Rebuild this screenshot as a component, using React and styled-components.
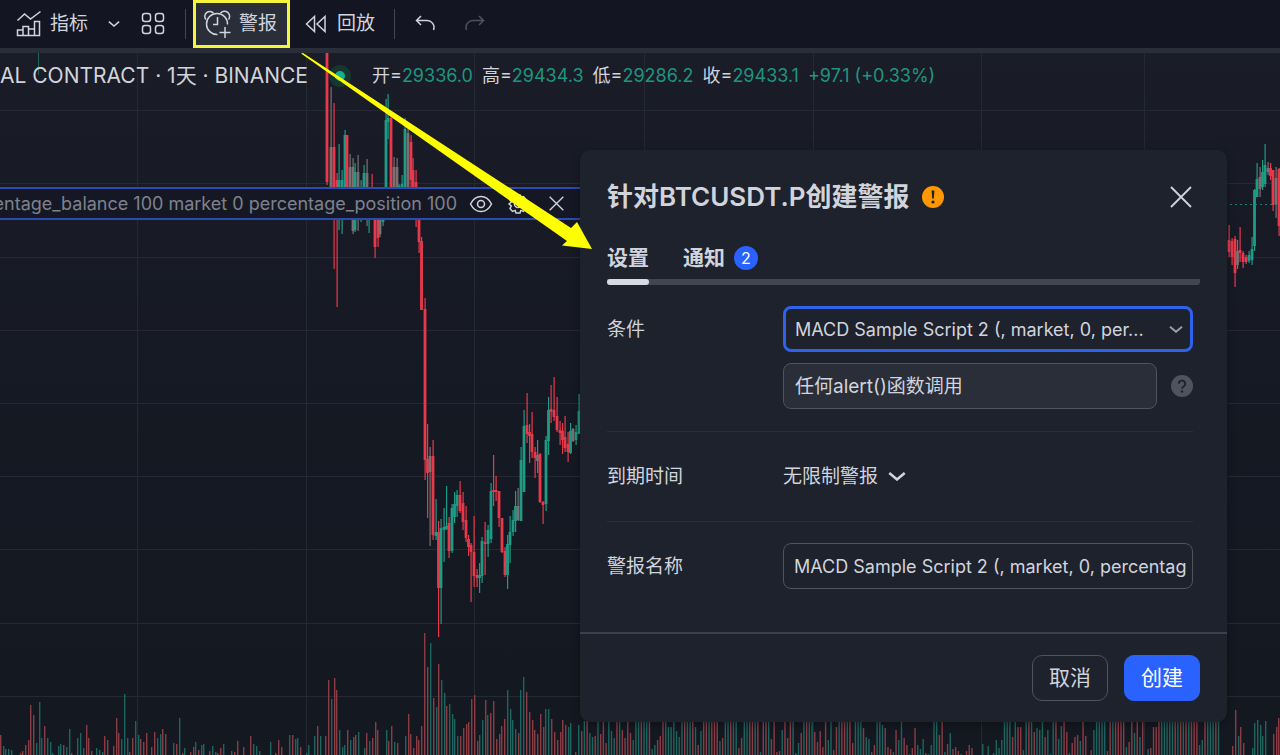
import React from 'react'
import styled, { createGlobalStyle, css } from 'styled-components'

const GlobalStyle = createGlobalStyle`
  * {
    box-sizing: border-box;
  }
  body {
    margin: 0;
    background: #151923;
    color: #d1d4dc;
    font-family: Inter, 'Noto Sans CJK SC', sans-serif;
    font-size: 18px;
  }
  button,
  input,
  select {
    margin: 0;
    font-family: inherit;
    color: inherit;
  }
`

const Page = styled.div`
  position: relative;
  display: flex;
  flex-direction: column;
  height: 100vh;
  min-height: 740px;
  overflow: hidden;
`

/* toolbar */

const Toolbar = styled.header`
  display: flex;
  align-items: center;
  height: 53px;
  padding: 0 5px;
  background: #131622;
  border-bottom: 5px solid #2a2e39;
`

const Tool = styled.button`
  display: flex;
  align-items: center;
  gap: ${props => props.gap || 8}px;
  height: 48px;
  padding: 0 ${props => props.pad || 11}px;
  border: 0;
  background: none;
  font-size: 19px;
  line-height: 28px;
  white-space: nowrap;
  color: ${props => (props.dim ? '#50535e' : '#d1d4dc')};
  ${props =>
    props.marked &&
    css`
      margin-right: 4px;
      padding: 0 10px 0 8px;
      border: 3px solid #f5f53c;
      background: #2a2e39;
    `};
`

const ToolDivider = styled.span`
  width: 1px;
  height: 30px;
  margin: 0 7px 0 8px;
  background: #434651;
`

const Icon = styled.svg`
  flex: none;
  display: block;
  fill: none;
  stroke: currentColor;
  stroke-width: ${props => props.weight || 1.5};
`

/* chart */

const ChartArea = styled.main`
  position: relative;
  flex: 1;
  overflow: hidden;
  background: linear-gradient(#1a1c28, #151923 50%, #141820);
`

const ChartCanvas = styled.svg`
  position: absolute;
  inset: 0;
  width: 100%;
  height: 100%;
`

const Legend = styled.div`
  position: relative;
  display: flex;
  align-items: center;
  gap: 21px;
  height: 46px;
  white-space: nowrap;
`

const Symbol = styled.h1`
  margin: 0;
  font-size: 21px;
  font-weight: 400;
  line-height: 28px;
`

const StatusDot = styled.span`
  width: 22px;
  height: 22px;
  border: 6px solid #16362f;
  border-radius: 50%;
  background: #12b08e;
`

const Prices = styled.div`
  display: flex;
  gap: 9px;
  line-height: 28px;
`

const Up = styled.span`
  color: #1f957f;
`

const Strategy = styled.div`
  position: relative;
  display: flex;
  align-items: center;
  justify-content: flex-end;
  width: 594px;
  height: 33px;
  margin-top: 88px;
  padding-right: 30px;
  border: solid #2a4cae;
  border-width: 2px 0;
  background: #151824;
  overflow: hidden;
  white-space: nowrap;
`

const StrategyName = styled.span`
  margin-right: 12px;
  color: #7f828d;
`

const StrategyButton = styled.button`
  display: flex;
  align-items: center;
  padding: 0;
  margin-left: ${props => props.gap || 0}px;
  border: 0;
  background: none;
`

/* alert dialog */

const Dialog = styled.section`
  position: absolute;
  top: 150px;
  right: 53px;
  width: min(647px, 94vw);
  border-radius: 10px;
  background: #1e222d;
  box-shadow: 0 2px 10px rgba(0, 0, 0, 0.35);
`

const DialogHeader = styled.div`
  display: flex;
  align-items: center;
  gap: 12px;
  padding: 30px 35px 0 27px;
`

const DialogTitle = styled.h2`
  margin: 0;
  font-size: 26px;
  font-weight: 600;
  line-height: 34px;
`

const CloseButton = styled.button`
  display: flex;
  margin-left: auto;
  padding: 0;
  border: 0;
  background: none;
`

const Tabs = styled.div`
  display: flex;
  gap: 34px;
  margin: 30px 27px 0;
  border-bottom: 6px solid #434651;
  border-radius: 0 0 3px 3px;
`

const Tab = styled.button`
  position: relative;
  display: flex;
  align-items: center;
  gap: 9px;
  height: 35px;
  padding: 0 0 7px;
  border: 0;
  background: none;
  font-size: 21px;
  font-weight: 600;
  line-height: 28px;
  ${props =>
    props.active &&
    css`
      &::after {
        content: '';
        position: absolute;
        right: 0;
        bottom: -6px;
        left: 0;
        height: 6px;
        border-radius: 3px;
        background: #d8dae3;
      }
    `};
`

const Count = styled.span`
  width: 24px;
  border-radius: 12px;
  background: #2962ff;
  color: #fff;
  font-size: 16px;
  font-weight: 400;
  line-height: 24px;
  text-align: center;
`

const Form = styled.form`
  padding: 21px 34px 21px 27px;
`

const Row = styled.div`
  display: grid;
  grid-template-columns: 176px minmax(0, 1fr);
  align-items: start;
  padding-bottom: 22px;
  & + & {
    padding-top: 21px;
    border-top: 1px solid #2a2e39;
  }
`

const Label = styled.label`
  height: 46px;
  font-size: 19px;
  line-height: 48px;
`

const Stack = styled.div`
  display: grid;
  gap: 11px;
`

const Line = styled.div`
  display: flex;
  align-items: center;
  gap: 14px;
`

const SelectBox = styled.div`
  display: grid;
  flex: ${props => (props.inline ? 'none' : 1)};
  align-items: center;
  & > * {
    grid-area: 1 / 1;
  }
  & > svg {
    justify-self: end;
    margin-right: ${props => (props.inline ? 0 : 10)}px;
    color: ${props => (props.inline ? '#d1d4dc' : '#9a9da8')};
    pointer-events: none;
  }
`

const field = css`
  width: 100%;
  height: 46px;
  padding: 0 10px;
  border: 1px solid #50535e;
  border-radius: 8px;
  background: #1e222d;
  font-size: 18px;
  outline: none;
`

const Select = styled.select`
  ${field};
  appearance: none;
  &:disabled {
    padding: 0 11px;
    background: #2a2e39;
    color: #d1d4dc;
    font-size: 19px;
    opacity: 1;
  }
  ${props =>
    props.focused &&
    css`
      padding: 0 9px;
      border: 3px solid #2f62ea;
    `};
`

const PlainSelect = styled.select`
  height: 46px;
  padding: 0 27px 0 0;
  border: 0;
  background: none;
  appearance: none;
  font-size: 19px;
`

const TextInput = styled.input`
  ${field};
  padding: 0 5px 0 10px;
`

const DialogFooter = styled.div`
  display: flex;
  justify-content: flex-end;
  gap: 16px;
  padding: 21px 27px;
  border-top: 2px solid #3c404b;
`

const Action = styled.button`
  height: 46px;
  padding: 0 16px;
  border: 1px solid ${props => (props.primary ? '#2962ff' : '#50535e')};
  border-radius: 10px;
  background: ${props => (props.primary ? '#2962ff' : 'transparent')};
  color: ${props => (props.primary ? '#fff' : '#d1d4dc')};
  font-size: 21px;
  line-height: 28px;
`

const Pointer = styled.svg`
  position: absolute;
  top: 50px;
  left: 298px;
  width: 300px;
  height: 204px;
  pointer-events: none;
`

/* x, high, low, body top, body bottom, colour */
const candles = [
  [327, 53, 185, 53, 182, 'r'], [331, 87, 187, 147, 187, 'm'], [334, 103, 269, 147, 187, 'r'],
  [337, 173, 307, 180, 190, 'r'], [339, 144, 230, 180, 190, 'g'], [342, 170, 234, 180, 190, 'g'],
  [345, 130, 190, 135, 190, 'g'], [347, 135, 190, 135, 190, 'r'], [350, 154, 190, 167, 190, 'm'],
  [353, 158, 234, 167, 231, 'm'], [355, 163, 232, 172, 230, 'g'], [358, 155, 231, 172, 190, 'm'],
  [361, 180, 222, 190, 200, 'g'], [364, 165, 200, 173, 190, 'g'], [367, 159, 226, 173, 190, 'm'],
  [369, 187, 233, 190, 200, 'g'], [372, 174, 218, 190, 200, 'r'], [375, 195, 258, 200, 247, 'r'],
  [378, 200, 247, 210, 238, 'r'], [380, 200, 237, 210, 234, 'm'], [383, 190, 226, 200, 222, 'g'],
  [386, 99, 190, 120, 190, 'g'], [388, 94, 139, 118, 122, 'g'], [391, 116, 190, 118, 190, 'r'],
  [394, 157, 190, 167, 190, 'm'], [397, 158, 190, 167, 190, 'm'], [399, 184, 190, 186, 190, 'g'],
  [402, 175, 190, 184, 190, 'g'], [405, 118, 190, 129, 190, 'g'], [408, 128, 190, 133, 190, 'm'],
  [411, 135, 190, 142, 180, 'r'], [413, 158, 190, 170, 190, 'r'], [416, 170, 227, 182, 215, 'r'],
  [419, 200, 253, 205, 242, 'r'], [421.5, 237, 310, 241, 310, 'r'], [425, 298, 480, 309, 460, 'r'],
  [427.5, 424, 518, 459, 473, 'r'], [430, 447, 546, 456, 472, 'm'], [433, 440, 540, 456, 535, 'r'],
  [436, 499, 540, 532, 536, 'g'], [438.5, 521, 637, 532, 588, 'r'], [441, 519, 624, 528, 588, 'g'],
  [444, 508, 562, 527, 530, 'g'], [446.5, 486, 530, 526, 529, 'g'], [449, 517, 558, 523, 551, 'r'],
  [452, 504, 553, 508, 551, 'g'], [454.5, 492, 523, 504, 517, 'g'], [457, 490, 517, 495, 506, 'g'],
  [460, 481, 513, 495, 511, 'r'], [463, 492, 530, 503, 522, 'r'], [466, 506, 542, 520, 538, 'r'],
  [468.5, 535, 556, 539, 547, 'r'], [471, 543, 602, 545, 552, 'r'], [474, 516, 587, 552, 576, 'r'],
  [477, 569, 587, 575, 578, 'r'], [479.5, 563, 593, 575, 578, 'g'], [482, 537, 583, 541, 576, 'g'],
  [485, 522, 575, 542, 544, 'r'], [488, 525, 557, 530, 544, 'g'], [491, 483, 543, 491, 539, 'g'],
  [493.5, 455, 506, 490, 492, 'r'], [496, 476, 501, 490, 492, 'r'], [499, 491, 527, 491, 518, 'r'],
  [502, 518, 553, 518, 552, 'r'], [505, 547, 577, 551, 575, 'r'], [507.5, 535, 589, 544, 575, 'g'],
  [510, 516, 563, 532, 545, 'g'], [513, 510, 536, 520, 532, 'g'], [515.5, 491, 532, 506, 521, 'g'],
  [518, 488, 521, 506, 520, 'm'], [521, 447, 521, 460, 521, 'g'], [524, 410, 492, 426, 492, 'g'],
  [527, 393, 443, 425, 434, 'r'], [529.5, 424, 463, 432, 436, 'r'], [532, 412, 458, 434, 452, 'r'],
  [535, 447, 478, 452, 458, 'r'], [537.5, 440, 473, 455, 461, 'm'], [540, 453, 503, 454, 502, 'r'],
  [543, 501, 524, 502, 505, 'r'], [546, 436, 511, 440, 504, 'g'], [548.5, 397, 455, 410, 441, 'g'],
  [551, 385, 423, 409, 412, 'r'], [554, 377, 421, 410, 417, 'r'], [557, 397, 432, 416, 430, 'r'],
  [560, 421, 445, 430, 433, 'r'], [562.5, 423, 454, 431, 440, 'r'], [565, 416, 452, 437, 448, 'r'],
  [568, 432, 462, 444, 452, 'r'], [570.5, 423, 454, 431, 453, 'g'], [573, 428, 442, 429, 441, 'm'],
  [576, 425, 445, 432, 440, 'g'], [579, 394, 434, 411, 434, 'g'],
  [1229, 225, 257, 240, 252, 'r'], [1232, 238, 265, 241, 257, 'r'], [1235, 236, 287, 239, 273, 'r'],
  [1237.5, 240, 269, 251, 265, 'm'], [1240, 227, 262, 250, 253, 'r'], [1243, 251, 268, 253, 262, 'r'],
  [1246, 255, 264, 257, 262, 'r'], [1249, 251, 263, 255, 261, 'g'], [1252, 237, 265, 249, 260, 'g'],
  [1254.5, 189, 251, 190, 246, 'g'], [1257, 163, 197, 179, 197, 'g'], [1260, 167, 197, 177, 189, 'm'],
  [1262.5, 160, 190, 172, 187, 'g'], [1265, 144, 187, 165, 184, 'g'], [1268, 162, 175, 168, 172, 'm'],
  [1270.5, 163, 180, 168, 176, 'r'], [1273, 170, 211, 170, 205, 'r'], [1276, 167, 218, 178, 205, 'm'],
  [1279, 168, 236, 169, 226, 'r'],
]

/* x, height; negative heights are falling days */
const volumes = [
  [0, -20], [3, 9], [5, 6], [8, 6], [11, 5], [20, -2], [22, -4], [25, -10], [28, -15], [30, -50],
  [33, -40], [36, 12], [39, 53], [41, 17], [44, -29], [47, 17], [50, 13], [52, 2], [58, 9], [60, 11],
  [63, -10], [66, 8], [69, 26], [71, -2], [77, 17], [80, 22], [83, 7], [86, -30], [88, -17], [91, -4],
  [96, 7], [99, 5], [102, 3], [104, -19], [107, -15], [113, -9], [116, -37], [118, -22], [121, 16],
  [124, 61], [127, 17], [129, -3], [132, -17], [135, 34], [138, 20], [140, -16], [143, -13], [146, -22],
  [151, -8], [154, -23], [157, 17], [160, 21], [162, -26], [165, -21], [173, 12], [176, -11], [179, 37],
  [182, -2], [184, 7], [190, -3], [193, -8], [195, 13], [198, -5], [201, 10], [203, 11], [209, -4],
  [212, 9], [215, 3], [217, -2], [220, -7], [223, 11], [231, 4], [234, -3], [237, -14], [243, -8],
  [250, -19], [253, 11], [256, 9], [259, 4], [270, 13], [275, -2], [278, -15], [281, -8], [289, 20],
  [292, -20], [295, 16], [297, 17], [300, -8], [306, 2], [308, 10], [314, 19], [317, -29], [320, 19],
  [325, -19], [328, -75], [331, 56], [334, -77], [336, -65], [339, 25], [342, 8], [344, 10], [347, -25],
  [350, 15], [353, -18], [355, -20], [358, 23], [364, 7], [366, -22], [369, 14], [372, -17], [375, -33],
  [377, -25], [386, 25], [388, -14], [391, -29], [394, 13], [397, -12], [405, 19], [408, -41], [410, -21],
  [413, -7], [416, -19], [418, -15], [421, -29], [424, -122], [427, -88], [430, 112], [433, -57],
  [436, 48], [438, -91], [441, 75], [444, 62], [446, -49], [449, 51], [452, 41], [454, 36], [457, 19],
  [460, -19], [463, -27], [466, -31], [468, -33], [471, -56], [474, -60], [477, -14], [479, 20], [482, 35],
  [485, -55], [487, 40], [490, -42], [493, -54], [496, -16], [499, -21], [501, -29], [504, -36], [507, 65],
  [510, 46], [512, 35], [515, 26], [518, -22], [520, 65], [523, 78], [526, -63], [529, -43], [532, -35],
  [534, -25], [537, -21], [540, -41], [543, -28], [545, 46], [548, 46], [551, -36], [554, -23], [557, -15],
  [560, -23], [562, -35], [565, -30], [568, 28], [570, 32], [575, -3], [578, 30], [1232, -9], [1235, -45],
  [1238, 19], [1240, -28], [1243, -12], [1252, 7], [1254, 32], [1257, 35], [1260, 30], [1262, 19],
  [1265, 34], [1273, -21], [1276, -28], [1278, -37],
]

/* evenly spaced run of days under the dialog, starting at x = 581 */
const denseVolumes = [
  -24, 34, -34, 22, 18, -19, 34, -21, -34, -12, 34, 24, 17, -34, 34, -25, -17, -34, -22, 15, 34, 34, -34,
  34, 34, -34, 6, 10, -15, -19, -34, 34, 28, 28, 34, 24, 18, 34, -34, 34, 34, -34, 28, -10, 24, -34, -34, 34,
  -34, -34, -34, 14, -17, 34, 34, -34, 34, 34, -7, -17, 34, 34, -34, -34, 34, -34, 3, -34, -34, 34, -16, -34,
  -3, -4, 25, -34, -17, -34, 34, 2, 12, -22, 34, -34, 34, 34, -23, -13, -24, -8, -34, 15, 34, -5, -28, 34,
  -34, -34, 34, -34, -12, 34, 34, 34, -27, 18, 16, -3, -10, 34, 34, 30, -27, -8, -6, 3, -25, 15, 34, -17,
  -10, 1, -7, -27, 10, 6, 16, -2, 1, 10, 34, 34, -20, -33, 3, -11, 22, -6, -8, -4, 1, 0, -4, -10, -7, 0,
  0, 0, 11, 0, 9, 0, 2, 15, 7, 15, 34, 34, 34, -18, 34, -28, -28, 5, 34, -34, 34, -23, 27, 25, 34, -18, 25,
  1, 34, -34, 16, 29, -34, -23, 2, -12, -18, -20, 14, -34, -19, 0, -5, 25, 34, 34, 34, 34, -4, -34, 34,
  -34, -34, -34, -34, 8, -13, -34, 22, -34, 18, -34, 0, 6, -7, -28, -28, -34, 34, 34, 34, 34, 34, -34, 34,
  -34, 34, -34, 34, -34, -34, -34, 10, 15, -34, 34, 34, 34, -34, 34,
].map((height, i) => [581 + i * 2.71, height])

const candleColors = { r: '#e8394c', g: '#1e9a85', m: '#7d6f70' }
const gridX = [137, 306, 474, 644, 813, 981, 1144]
const gridY = [110, 183, 257, 330, 403, 476, 549, 623, 696]

const Chart = () => (
  <ChartCanvas viewBox="0 53 1280 702" preserveAspectRatio="xMinYMin slice" aria-hidden="true">
    <g fill="#252933">
      {gridX.map(x => <rect key={x} x={x} y="53" width="1" height="702" />)}
      {gridY.map(y => <rect key={y} x="0" y={y} width="1280" height="1" />)}
    </g>
    {[...volumes, ...denseVolumes].map(([x, h], i) => (
      <rect key={i} x={x} y={755 - Math.abs(h)} width="1.4" height={Math.abs(h)} fill={h < 0 ? '#8a3c45' : '#1d645f'} />
    ))}
    <rect x="38" y="53" width="1" height="22" fill="#1d645f" />
    {candles.map(([x, high, low, top, bottom, c]) => (
      <g key={x} fill={candleColors[c]}>
        <rect x={x - 0.5} y={high} width="1.2" height={low - high} />
        <rect x={x - 1.4} y={top} width="2.8" height={bottom - top} />
      </g>
    ))}
    <path d="M1230 204.5H1280" stroke="#1f7f70" strokeDasharray="2 3" />
  </ChartCanvas>
)

const Chevron = ({ width = 14, weight = 2 }) => (
  <Icon width={width} height={width * 0.5} viewBox="0 0 14 7" weight={weight}>
    <path d="M1 .8l6 5 6-5" />
  </Icon>
)

const Cross = ({ size, weight }) => (
  <Icon width={size} height={size} viewBox="0 0 22 22" weight={weight}>
    <path d="M1 1l20 20M21 1L1 21" />
  </Icon>
)

const prices = [['开', '29336.0'], ['高', '29434.3'], ['低', '29286.2'], ['收', '29433.1']]

const App = () => {
  return (
    <Page>
      <GlobalStyle />
      <Toolbar>
        <Tool>
          <Icon width="26" height="28" viewBox="0 0 26 28">
            <path d="M1.500 10.500l7-6.500 6 5L24.500 1.500" />
            <path d="M1.500 25.500v-5.500h5.500v5.500zM7 25.500v-9h5.500v9M12.500 25.500v-6.500h6v6.500M18.500 25.500V11.500h5v14zM7 25.500h11.500" />
          </Icon>
          指标
        </Tool>
        <Tool pad={9} aria-label="指标菜单">
          <Chevron width={12} weight={1.8} />
        </Tool>
        <Tool aria-label="布局">
          <Icon width="26" height="26" viewBox="0 0 26 26">
            <rect x="2.500" y="2.500" width="8" height="8" rx="2.500" />
            <rect x="15.500" y="2.500" width="8" height="8" rx="2.500" />
            <rect x="2.500" y="14.500" width="8" height="8" rx="2.500" />
            <rect x="15.500" y="14.500" width="8" height="8" rx="2.500" />
          </Icon>
        </Tool>
        <ToolDivider />
        <Tool marked>
          <Icon width="27" height="28" viewBox="0 0 27 28">
            <path d="M23.500 14.500A10.500 10.500 0 1 0 13.500 24.500" />
            <path d="M2 9.500A4.500 4.500 0 0 1 9.500 3.200M16.500 3.200A4.500 4.500 0 0 1 24.500 9.500" />
            <path d="M13.500 7v7.500H9M21 17v11M15.500 22.500h11" />
          </Icon>
          警报
        </Tool>
        <Tool gap={10}>
          <Icon width="22" height="20" viewBox="0 0 22 20">
            <path d="M9.500 2.500v15L1.500 10zM20 2.500v15L12 10z" />
          </Icon>
          回放
        </Tool>
        <ToolDivider />
        <Tool aria-label="撤销">
          <Icon width="24" height="20" viewBox="0 0 24 20">
            <path d="M8 2L3.500 6.500 8 11M3.500 6.500H13a7 7 0 0 1 7.500 9.500" />
          </Icon>
        </Tool>
        <Tool dim pad={15} aria-label="重做">
          <Icon width="24" height="20" viewBox="0 0 24 20">
            <path d="M16 2l4.500 4.500L16 11M20.500 6.500H11A7 7 0 0 0 3.500 16" />
          </Icon>
        </Tool>
      </Toolbar>

      <ChartArea>
        <Chart />
        <Legend>
          <Symbol>AL CONTRACT · 1天 · BINANCE</Symbol>
          <StatusDot />
          <Prices>
            {prices.map(([name, value]) => (
              <span key={name}>
                {name}=<Up>{value}</Up>
              </span>
            ))}
            <Up>+97.1 (+0.33%)</Up>
          </Prices>
        </Legend>
        <Strategy>
          <StrategyName>centage_balance 100 market 0 percentage_position 100</StrategyName>
          <StrategyButton aria-label="显示">
            <Icon width="24" height="20" viewBox="0 0 24 20">
              <path d="M1.500 10C4 5 7.500 2.500 12 2.500S20 5 22.500 10C20 15 16.500 17.500 12 17.500S4 15 1.500 10z" />
              <circle cx="12" cy="10" r="3.500" />
            </Icon>
          </StrategyButton>
          <StrategyButton gap={14} aria-label="设置">
            <Icon width="22" height="22" viewBox="0 0 22 22">
              <path d="M9 2h4l.8 2.600 2.700-1 2.500 3-1.300 2.400L20 11l-2.300 2 1.300 2.400-2.500 3-2.700-1L13 20H9l-.8-2.600-2.700 1-2.500-3L4.300 13 2 11l2.300-2L3 6.600l2.500-3 2.700 1z" />
              <circle cx="11" cy="11" r="3.500" />
            </Icon>
          </StrategyButton>
          <StrategyButton gap={20} aria-label="移除">
            <Cross size={15} weight={2} />
          </StrategyButton>
        </Strategy>
      </ChartArea>

      <Dialog role="dialog" aria-labelledby="alert-title">
        <DialogHeader>
          <DialogTitle id="alert-title">针对BTCUSDT.P创建警报</DialogTitle>
          <svg width="22" height="22" viewBox="0 0 22 22" aria-hidden="true">
            <circle cx="11" cy="11" r="11" fill="#ff9800" />
            <path d="M9.600 4.500h2.800l-.6 8h-1.600z" fill="#1e222d" />
            <circle cx="11" cy="16" r="1.600" fill="#1e222d" />
          </svg>
          <CloseButton aria-label="关闭">
            <Cross size={22} weight={1.8} />
          </CloseButton>
        </DialogHeader>
        <Tabs role="tablist">
          <Tab role="tab" aria-selected="true" active>设置</Tab>
          <Tab role="tab" aria-selected="false">
            通知<Count>2</Count>
          </Tab>
        </Tabs>
        <Form id="alert-form" onSubmit={e => e.preventDefault()}>
          <Row>
            <Label htmlFor="condition">条件</Label>
            <Stack>
              <SelectBox>
                <Select id="condition" focused>
                  <option>MACD Sample Script 2 (, market, 0, per...</option>
                </Select>
                <Chevron />
              </SelectBox>
              <Line>
                <SelectBox>
                  <Select aria-label="触发方式" disabled>
                    <option>任何alert()函数调用</option>
                  </Select>
                </SelectBox>
                <svg width="22" height="22" viewBox="0 0 22 22" aria-hidden="true">
                  <circle cx="11" cy="11" r="11" fill="#50535e" />
                  <path d="M7.800 8.800a3.200 3.200 0 1 1 4.800 2.700c-1.100.6-1.600 1.100-1.600 2.300" fill="none" stroke="#1e222d" strokeWidth="1.8" />
                  <circle cx="11" cy="16.500" r="1.200" fill="#1e222d" />
                </svg>
              </Line>
            </Stack>
          </Row>
          <Row>
            <Label htmlFor="expiry">到期时间</Label>
            <Line>
              <SelectBox inline>
                <PlainSelect id="expiry">
                  <option>无限制警报</option>
                </PlainSelect>
                <Chevron width={18} />
              </SelectBox>
            </Line>
          </Row>
          <Row>
            <Label htmlFor="alert-name">警报名称</Label>
            <TextInput
              id="alert-name"
              defaultValue="MACD Sample Script 2 (, market, 0, percentage_balance, 100)"
            />
          </Row>
        </Form>
        <DialogFooter>
          <Action type="button">取消</Action>
          <Action type="submit" form="alert-form" primary>创建</Action>
        </DialogFooter>
      </Dialog>

      <Pointer viewBox="298 50 300 204" aria-hidden="true">
        <path d="M301 53.500L303 53 571 228 577 222 592 249 562 245.500 567 241z" fill="#ffff00" />
      </Pointer>
    </Page>
  )
}

export default App
